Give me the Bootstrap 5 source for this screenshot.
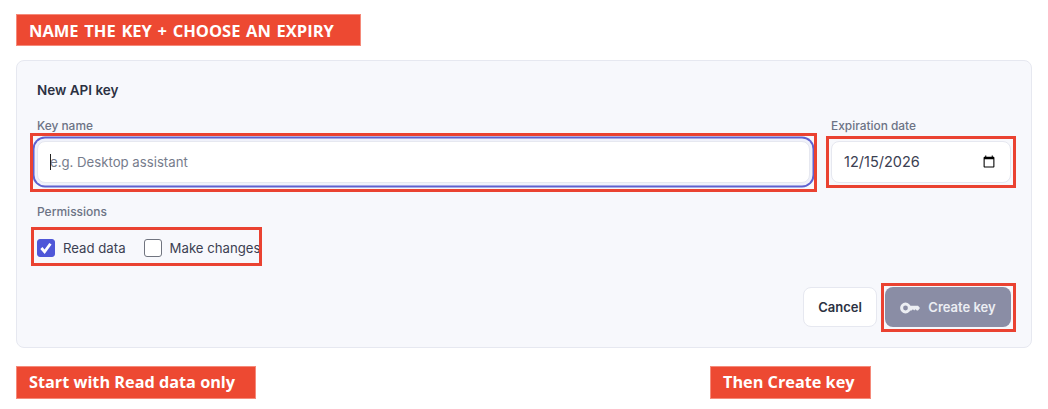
<!DOCTYPE html>
<html lang="en">
<head>
<meta charset="utf-8">
<title>New API key</title>
<link href="https://cdn.jsdelivr.net/npm/bootstrap@5.3.0/dist/css/bootstrap.min.css" rel="stylesheet">
<style>
html,body{height:100%;overflow:hidden}
body{background:#fff;font-family:Inter,"Liberation Sans",sans-serif;padding:14px 16px 0;color:#2c3142}
.callout{background:#ed4932;outline:1px solid #f58a7a;outline-offset:-1px;color:#fff;font-family:"Open Sans","Noto Sans",sans-serif;font-weight:700;padding:0 13px;display:block}
.callout-top{width:345px;height:32px;line-height:33px;font-size:16.5px;word-spacing:1.4px}
.callout-low{height:33px;line-height:33px;font-size:16.25px}
.callout-a{width:240px}
.callout-b{width:161px}
.panel-box{margin-top:14px;height:288px;background:#f7f8fc;border:1px solid #e6e8f0;border-radius:8px;padding:20px}
.panel-title{font-size:13.5px;font-weight:600;line-height:18px;margin-bottom:20px;color:#2c3142}
.field-grid{display:grid;grid-template-columns:773px 180px;column-gap:21px}
.field-label{display:block;font-size:11.9px;font-weight:500;line-height:14px;margin-bottom:8px;color:#6c7385}
.field-input.form-control{height:42px;border:1px solid #e6e8f0;border-radius:8px;background:#fff;font-size:14.5px;color:#3b4052;padding:0 12px;box-shadow:none}
.field-input.is-on.form-control{font-size:13.2px}
.field-input.form-control::placeholder{color:#767c8c}
.field-input.is-on,.field-input.is-on:focus{box-shadow:0 0 0 2.5px #f0f2fb,0 0 0 4.5px #5f61cf;border-color:#e6e8f0}
.frame-wrap{position:relative}
.red-frame{position:absolute;border:3px solid #ea4231;pointer-events:none}
.frame-name{left:-7px;top:-8px;right:-7px;bottom:-9px}
.frame-date{left:-5px;top:-5px;right:-5px;bottom:-5px}
.frame-perm{left:-6px;top:-12px;right:-3px;bottom:-9px}
.frame-btn{left:-4px;top:-4px;right:-5px;bottom:-5px}
.type-caret{position:absolute;left:13px;top:13px;width:1px;height:16px;background:#222}
.perm-label{margin-top:22px;margin-bottom:20px;font-size:12px;font-weight:500;line-height:14px;color:#6c7385}
.perm-wrap{width:222px}
.perm-row{display:flex;gap:18px;height:18px;align-items:center;font-size:13.2px;color:#3b4052;white-space:nowrap}
.perm-item{display:flex;align-items:center;gap:8px}
.perm-text{margin-top:2px}
.perm-item .form-check-input{width:18px;height:18px;margin:0;border:1px solid #70747f;border-radius:3px;background-color:#fff;flex:none}
.perm-item .form-check-input:checked{background-color:#4f57d8;border-color:#4f57d8;background-size:100%;background-image:url("data:image/svg+xml,%3Csvg xmlns='http://www.w3.org/2000/svg' viewBox='0 0 18 18'%3E%3Cpath d='M3.8 9l3.6 4.2 6.6-9' fill='none' stroke='%23fff' stroke-width='3.2'/%3E%3C/svg%3E")}
.action-row{margin-top:30px;gap:8px}
.btn-cancel.btn{width:74px;height:40px;padding:2px 0 0;background:#fff;border:1px solid #e6e8f0;border-radius:8px;font-size:13px;font-weight:600;color:#2c3142}
.btn-create.btn{width:126px;height:40px;padding:2px 0 0;background:#8a8da5;border:0;border-radius:8px;font-size:13px;font-weight:600;color:#eceef3;opacity:1}
.low-row{margin-top:18px}
.low-gap{width:454px}
</style>
</head>
<body>
<div class="callout callout-top">NAME THE KEY + CHOOSE AN EXPIRY</div>
<div class="panel-box">
  <div class="panel-title">New API key</div>
  <div class="field-grid">
    <div>
      <label class="field-label" for="kn">Key name</label>
      <div class="frame-wrap">
        <input id="kn" class="form-control field-input is-on" type="text" placeholder="e.g. Desktop assistant">
        <span class="type-caret"></span>
        <div class="red-frame frame-name"></div>
      </div>
    </div>
    <div>
      <label class="field-label" for="ed">Expiration date</label>
      <div class="frame-wrap">
        <input id="ed" class="form-control field-input" type="date" value="2026-12-15">
        <div class="red-frame frame-date"></div>
      </div>
    </div>
  </div>
  <div class="perm-label">Permissions</div>
  <div class="frame-wrap perm-wrap">
    <div class="perm-row">
      <label class="perm-item"><input class="form-check-input" type="checkbox" checked><span class="perm-text">Read data</span></label>
      <label class="perm-item"><input class="form-check-input" type="checkbox"><span class="perm-text">Make changes</span></label>
    </div>
    <div class="red-frame frame-perm"></div>
  </div>
  <div class="d-flex justify-content-end action-row">
    <button class="btn btn-cancel" type="button">Cancel</button>
    <div class="frame-wrap">
      <button class="btn btn-create d-flex align-items-center justify-content-center gap-2" type="button">
        <svg width="20" height="12" viewBox="0 0 20 12" aria-hidden="true"><circle cx="5.5" cy="6" r="3.9" fill="none" stroke="#eceef3" stroke-width="3"/><path d="M9.5 3.8H18L20 6 18 8.4H16.8L15.5 7.2 14.2 8.4 12.9 7.2 11.6 8.4H9.5Z" fill="#eceef3"/></svg>
        <span>Create key</span>
      </button>
      <div class="red-frame frame-btn"></div>
    </div>
  </div>
</div>
<div class="d-flex low-row">
  <div class="callout callout-low callout-a">Start with Read data only</div>
  <div class="low-gap"></div>
  <div class="callout callout-low callout-b">Then Create key</div>
</div>
<script src="https://cdn.jsdelivr.net/npm/bootstrap@5.3.0/dist/js/bootstrap.bundle.min.js"></script>
</body>
</html>
